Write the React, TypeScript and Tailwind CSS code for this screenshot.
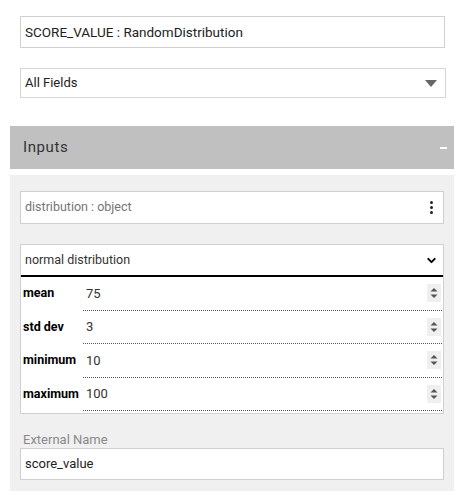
import { ChevronDown } from 'lucide-react';

const Spinner = () => (
  <div className="w-[14px] h-[18px] bg-[#efefef] flex items-center justify-center">
    <svg width="8" height="10" viewBox="0 0 8 10">
      <path d="M4 0 L7.5 3.5 L0.5 3.5 Z" fill="#555" />
      <path d="M4 10 L7.5 6.5 L0.5 6.5 Z" fill="#555" />
    </svg>
  </div>
);

const ParamRow = ({ label, value }: { label: string; value: string }) => (
  <div className="flex h-[33.5px]">
    <div className="w-[62px] pl-[2px] flex items-center text-[12.5px] font-bold text-black">{label}</div>
    <div className="flex-1 mr-[1px] flex items-center justify-between border-b border-dotted border-[#555] pl-[3px] pr-[1px]">
      <span className="text-[13px] text-[#333]">{value}</span>
      <Spinner />
    </div>
  </div>
);

export default function App() {
  return (
    <div className="w-[464px] h-[502px] bg-white pt-4 px-[10px] font-['Roboto','Liberation_Sans',sans-serif]">
      <div className="px-[10px]">
        <div className="h-[32px] w-[425px] border border-[#cfcfcf] flex items-center pl-[4px] text-[13.5px] text-[#222]">
          SCORE_VALUE : RandomDistribution
        </div>
        <div className="mt-[20px] h-[30px] w-[426px] border border-[#d6d6d6] flex items-center justify-between pl-[4px] pr-[8px] text-[13px] text-[#222]">
          <span>All Fields</span>
          <svg width="12" height="7" viewBox="0 0 12 7">
            <path d="M0 0 L12 0 L6 7 Z" fill="#666" />
          </svg>
        </div>
      </div>

      <div className="mt-[28px] h-[43px] bg-[#c0c0c0] flex items-center justify-between pl-[13px] pr-[7px]">
        <span className="text-[15px] tracking-[0.6px] text-[#333]">Inputs</span>
        <span className="w-[7px] h-[2px] bg-white" />
      </div>

      <div className="mt-[6px] bg-[#f0f0f0] px-[10px] pt-[16px] pb-[11px]">
        <div className="h-[33px] w-[424px] bg-white border border-[#d0d0d0] flex items-center justify-between pl-[4px] pr-[10px] text-[12.5px] text-[#757575]">
          <span>distribution : object</span>
          <div className="flex flex-col gap-[2px]">
            <span className="w-[3px] h-[3px] rounded-full bg-[#222]" />
            <span className="w-[3px] h-[3px] rounded-full bg-[#222]" />
            <span className="w-[3px] h-[3px] rounded-full bg-[#222]" />
          </div>
        </div>

        <div className="mt-[20px] w-[424px] bg-white border border-[#d0d0d0] pb-[2px]">
          <div className="h-[32px] border-b-2 border-black flex items-center justify-between pl-[4px] pr-[5px] text-[12.5px] text-[#333]">
            <span>normal distribution</span>
            <ChevronDown className="w-[13px] h-[13px] text-black" strokeWidth={3.5} />
          </div>
          <ParamRow label="mean" value="75" />
          <ParamRow label="std dev" value="3" />
          <ParamRow label="minimum" value="10" />
          <ParamRow label="maximum" value="100" />
        </div>

        <div className="mt-[18px] pl-[3px] text-[13px] text-[#8a8a8a] leading-[16px]">External Name</div>
        <div className="h-[32px] w-[424px] bg-white border border-[#d0d0d0] flex items-center pl-[4px] text-[13px] text-[#222]">
          score_value
        </div>
      </div>
    </div>
  );
}
